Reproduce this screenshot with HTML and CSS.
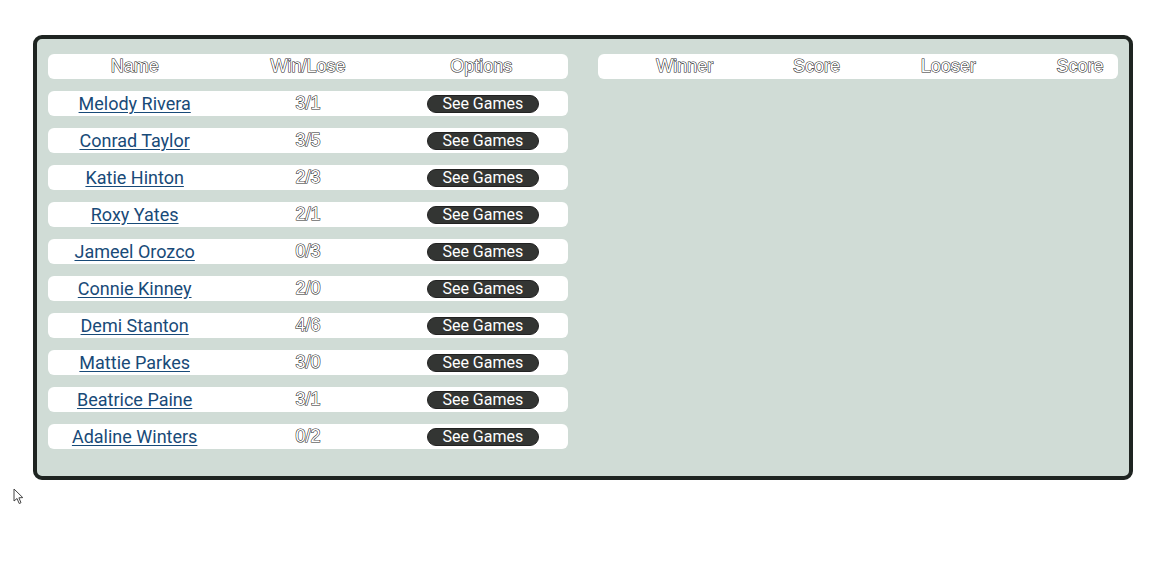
FILE: index.html
```html
<!DOCTYPE html>
<html>
<head>
<meta charset="utf-8">
<link rel="stylesheet" href="styles.css">
</head>
<body>
<div class="board">
  <div class="players">
    <div class="row head">
      <div class="cell outline">Name</div>
      <div class="cell outline">Win/Lose</div>
      <div class="cell outline">Options</div>
    </div>
    <div class="row"><div class="cell"><a href="#">Melody Rivera</a></div><div class="cell outline">3/1</div><div class="cell"><button class="btn">See Games</button></div></div>
    <div class="row"><div class="cell"><a href="#">Conrad Taylor</a></div><div class="cell outline">3/5</div><div class="cell"><button class="btn">See Games</button></div></div>
    <div class="row"><div class="cell"><a href="#">Katie Hinton</a></div><div class="cell outline">2/3</div><div class="cell"><button class="btn">See Games</button></div></div>
    <div class="row"><div class="cell"><a href="#">Roxy Yates</a></div><div class="cell outline">2/1</div><div class="cell"><button class="btn">See Games</button></div></div>
    <div class="row"><div class="cell"><a href="#">Jameel Orozco</a></div><div class="cell outline">0/3</div><div class="cell"><button class="btn">See Games</button></div></div>
    <div class="row"><div class="cell"><a href="#">Connie Kinney</a></div><div class="cell outline">2/0</div><div class="cell"><button class="btn">See Games</button></div></div>
    <div class="row"><div class="cell"><a href="#">Demi Stanton</a></div><div class="cell outline">4/6</div><div class="cell"><button class="btn">See Games</button></div></div>
    <div class="row"><div class="cell"><a href="#">Mattie Parkes</a></div><div class="cell outline">3/0</div><div class="cell"><button class="btn">See Games</button></div></div>
    <div class="row"><div class="cell"><a href="#">Beatrice Paine</a></div><div class="cell outline">3/1</div><div class="cell"><button class="btn">See Games</button></div></div>
    <div class="row"><div class="cell"><a href="#">Adaline Winters</a></div><div class="cell outline">0/2</div><div class="cell"><button class="btn">See Games</button></div></div>
  </div>
  <div class="games">
    <div class="row games-head">
      <div class="cell outline">Winner</div>
      <div class="cell outline">Score</div>
      <div class="cell outline">Looser</div>
      <div class="cell outline">Score</div>
    </div>
  </div>
</div>
<svg class="cursor" width="12" height="18" viewBox="0 0 12 18"><path d="M1 1 L1 13 L4 10.5 L6.2 15.5 L8 14.7 L5.9 9.8 L9.8 9.6 Z" fill="#fff" stroke="#444" stroke-width="1" stroke-linejoin="round"/></svg>
</body>
</html>
```

FILE: styles.css
```css
html, body {
  margin: 0;
  padding: 0;
  background: #ffffff;
}
body {
  position: relative;
  width: 1176px;
  height: 588px;
  overflow: hidden;
  font-family: "Liberation Sans", Arial, sans-serif;
}
.board {
  box-sizing: border-box;
  width: 1100px;
  margin: 35px 0 0 33px;
  border: 4px solid #1e2421;
  border-radius: 9px;
  background: #d0dcd6;
  padding: 15px 11px;
  display: flex;
  gap: 30px;
  align-items: flex-start;
}
.players, .games {
  width: 520px;
  flex: none;
}
.row {
  box-sizing: border-box;
  height: 25px;
  background: #ffffff;
  border-radius: 6px;
  margin-bottom: 12px;
  display: grid;
  grid-template-columns: repeat(3, 1fr);
  align-items: center;
}
.games-head {
  grid-template-columns: repeat(4, 131.7px);
  padding-left: 21px;
  overflow: visible;
}
.cell {
  text-align: center;
  line-height: 25px;
  height: 25px;
  white-space: nowrap;
}
.outline {
  font-family: "Liberation Sans", Arial, sans-serif;
  font-size: 18px;
  color: #ffffff;
  -webkit-text-stroke: 1.1px #1c1c1c;
  paint-order: stroke fill;
}
.cell a {
  font-family: Roboto, "Liberation Sans", sans-serif;
  font-size: 18px;
  color: #184a78;
  text-decoration: underline;
  text-underline-offset: 2px;
}
.btn {
  font-family: Roboto, "Liberation Sans", sans-serif;
  font-size: 16px;
  color: #ffffff;
  background: #333533;
  border: 1px solid #222;
  border-radius: 9px;
  width: 112px;
  height: 18px;
  padding: 0;
  line-height: 16px;
  vertical-align: middle;
  margin: -1px 0 0 3px;
}
.cursor {
  position: absolute;
  left: 13px;
  top: 488px;
}
```
